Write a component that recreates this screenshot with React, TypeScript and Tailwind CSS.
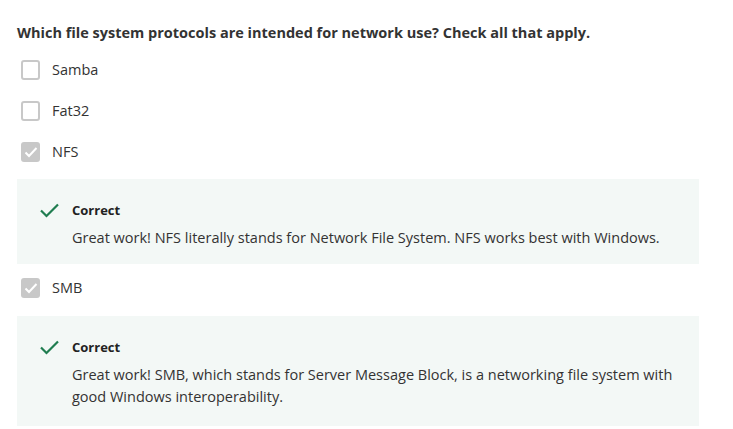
import React from "react";

const font = { fontFamily: '"Open Sans", "Noto Sans", sans-serif' };

function Box({ checked }: { checked?: boolean }) {
  if (checked) {
    return (
      <div className="w-[19px] h-[20px] rounded-[3px] bg-[#c8c8c8] flex items-center justify-center shrink-0">
        <svg width="14" height="12" viewBox="0 0 14 12" fill="none">
          <path d="M1.5 6.5 L5 10 L12.5 2" stroke="#fff" strokeWidth="2" />
        </svg>
      </div>
    );
  }
  return <div className="w-[19px] h-[20px] rounded-[3px] border-2 border-[#c8c8c8] bg-white shrink-0" />;
}

function Option({ label, checked }: { label: string; checked?: boolean }) {
  return (
    <div className="flex items-center h-[20px] pl-[21px]">
      <Box checked={checked} />
      <span className="ml-[12px] text-[14.5px] text-[#333]">{label}</span>
    </div>
  );
}

function Feedback({ children, bottom }: { children: React.ReactNode; bottom: string }) {
  return (
    <div className={`ml-[17px] w-[682px] bg-[#f3f8f6] pl-[23px] pr-4 pt-[22px] ${bottom}`}>
      <div className="flex">
        <svg width="19" height="15" viewBox="0 0 19 15" fill="none" className="mt-[2px] shrink-0">
          <path d="M1 7.5 L6.5 13 L18 1.5" stroke="#1f7d50" strokeWidth="2.2" />
        </svg>
        <div className="ml-[13px]">
          <div className="text-[13px] font-bold text-[#222] leading-[18px]">Correct</div>
          <div className="text-[14.5px] text-[#333] leading-[22px] mt-[8px]">{children}</div>
        </div>
      </div>
    </div>
  );
}

export default function App() {
  return (
    <div className="bg-white w-[733px] h-[429px] overflow-hidden pt-[23px]" style={font}>
      <div className="pl-[17px] text-[14.5px] font-bold text-[#333] leading-[20px]">
        Which file system protocols are intended for network use? Check all that apply.
      </div>
      <div className="mt-[17px] flex flex-col gap-[21px]">
        <Option label="Samba" />
        <Option label="Fat32" />
        <Option label="NFS" checked />
      </div>
      <div className="mt-[17px]">
        <Feedback bottom="pb-[15px]">
          Great work! NFS literally stands for Network File System. NFS works best with Windows.
        </Feedback>
      </div>
      <div className="mt-[14px]">
        <Option label="SMB" checked />
      </div>
      <div className="mt-[18px]">
        <Feedback bottom="pb-[18px]">
          Great work! SMB, which stands for Server Message Block, is a networking file system with
          <br />
          good Windows interoperability.
        </Feedback>
      </div>
    </div>
  );
}
